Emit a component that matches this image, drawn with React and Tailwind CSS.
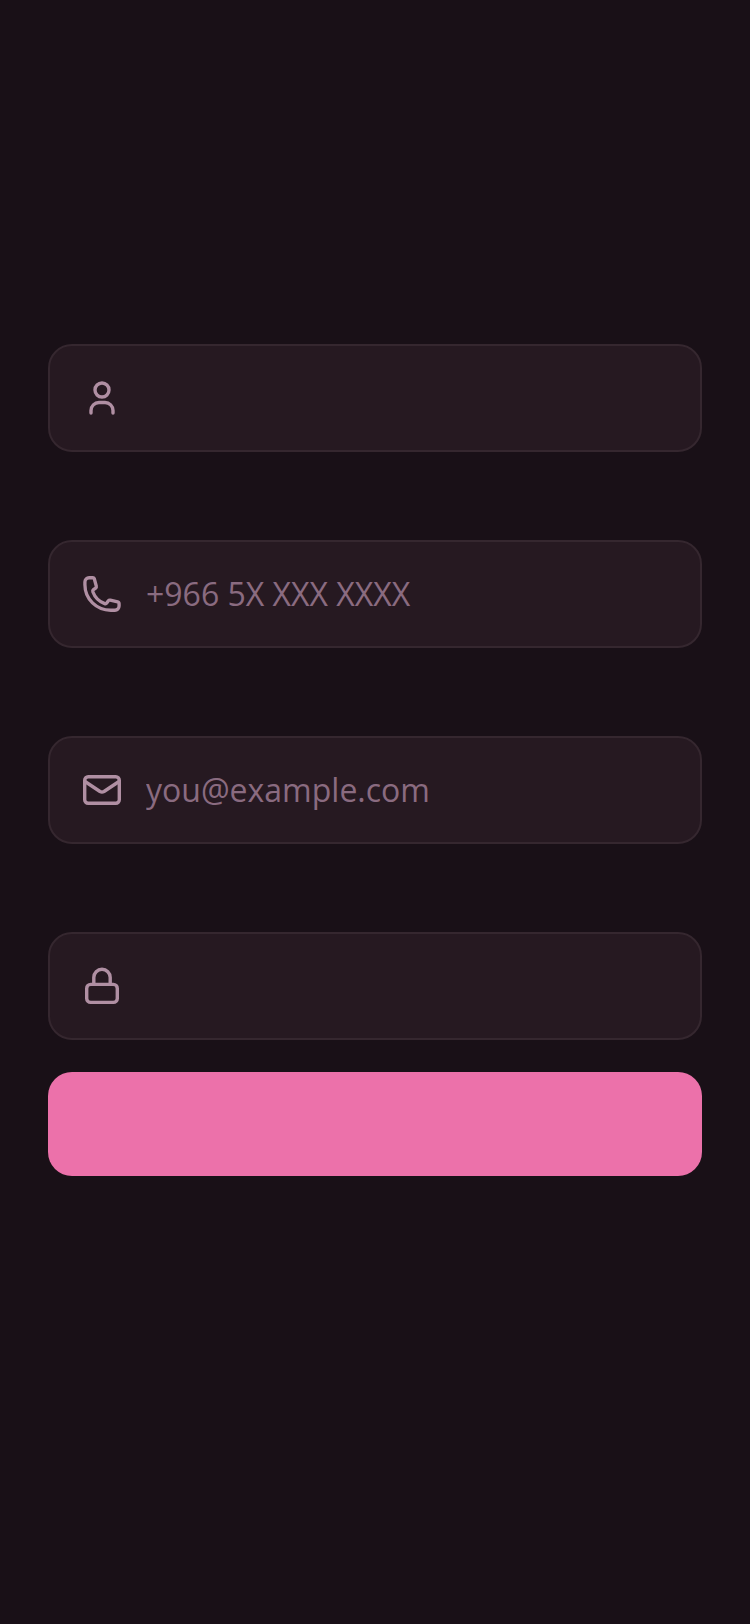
import React from 'react';

const UserIcon = () => (
    <svg width="40" height="40" viewBox="0 0 40 40" fill="none" stroke="currentColor" strokeWidth="3.4" strokeLinecap="round" strokeLinejoin="round">
        <circle cx="20" cy="12" r="7" />
        <path d="M9 35v-2.5a8 8 0 0 1 8-8h6a8 8 0 0 1 8 8V35" />
    </svg>
);

const PhoneIcon = () => (
    <svg width="40" height="40" viewBox="0 0 24 24" fill="none" stroke="currentColor" strokeWidth="2" strokeLinecap="round" strokeLinejoin="round">
        <path d="M1.75 6.5c0 8.56 6.94 15.25 15.5 15.25h2.5a2.5 2.5 0 0 0 2.5-2.5v-1.37c0-.52-.35-.97-.85-1.09l-4.42-1.11c-.44-.11-.9.06-1.17.42l-.97 1.29c-.28.38-.77.54-1.21.38a12.04 12.04 0 0 1-7.14-7.14c-.16-.44 0-.93.38-1.21l1.29-.97c.36-.27.53-.73.42-1.17L7.46 3.16a1.13 1.13 0 0 0-1.09-.91H4.25a2.5 2.5 0 0 0-2.5 2.5v1.75Z" />
    </svg>
);

const MailIcon = () => (
    <svg width="40" height="40" viewBox="0 0 40 40" fill="none" stroke="currentColor" strokeWidth="3.4" strokeLinecap="round" strokeLinejoin="round">
        <rect x="2.7" y="6.7" width="34.6" height="26.6" rx="3.5" />
        <path d="M3 11.5l15 10a4 4 0 0 0 4 0l15-10" />
    </svg>
);

const LockIcon = () => (
    <svg width="40" height="40" viewBox="0 0 40 40" fill="none" stroke="currentColor" strokeWidth="3.4" strokeLinecap="round" strokeLinejoin="round">
        <rect x="4.7" y="18.4" width="30.6" height="18" rx="4" />
        <path d="M11.8 18v-6.5a8.2 8.2 0 0 1 16.4 0V18" />
    </svg>
);

const Field = ({ icon, placeholder, type = 'text' }) => (
    <div className="flex items-center h-[108px] gap-6 px-8 rounded-3xl border-2 border-[#35272f] bg-[#261921]">
        <span className="shrink-0 text-[#b08fa3]">{icon}</span>
        <input
            type={type}
            placeholder={placeholder}
            className="flex-1 min-w-0 bg-transparent outline-none text-[32px] font-['Open_Sans',sans-serif] text-white placeholder:text-[#8a6b80]"
        />
    </div>
);

const App = () => {
    return (
        <div className="min-h-[1624px] bg-[#191017] px-12 pt-[344px]">
            <div className="flex flex-col gap-[88px]">
                <Field icon={<UserIcon />} />
                <Field icon={<PhoneIcon />} placeholder="+966 5X XXX XXXX" type="tel" />
                <Field icon={<MailIcon />} placeholder="you@example.com" type="email" />
                <Field icon={<LockIcon />} type="password" />
            </div>
            <button className="block w-full h-[104px] mt-8 rounded-3xl bg-[#ec71aa]"></button>
        </div>
    );
};

export default App;
